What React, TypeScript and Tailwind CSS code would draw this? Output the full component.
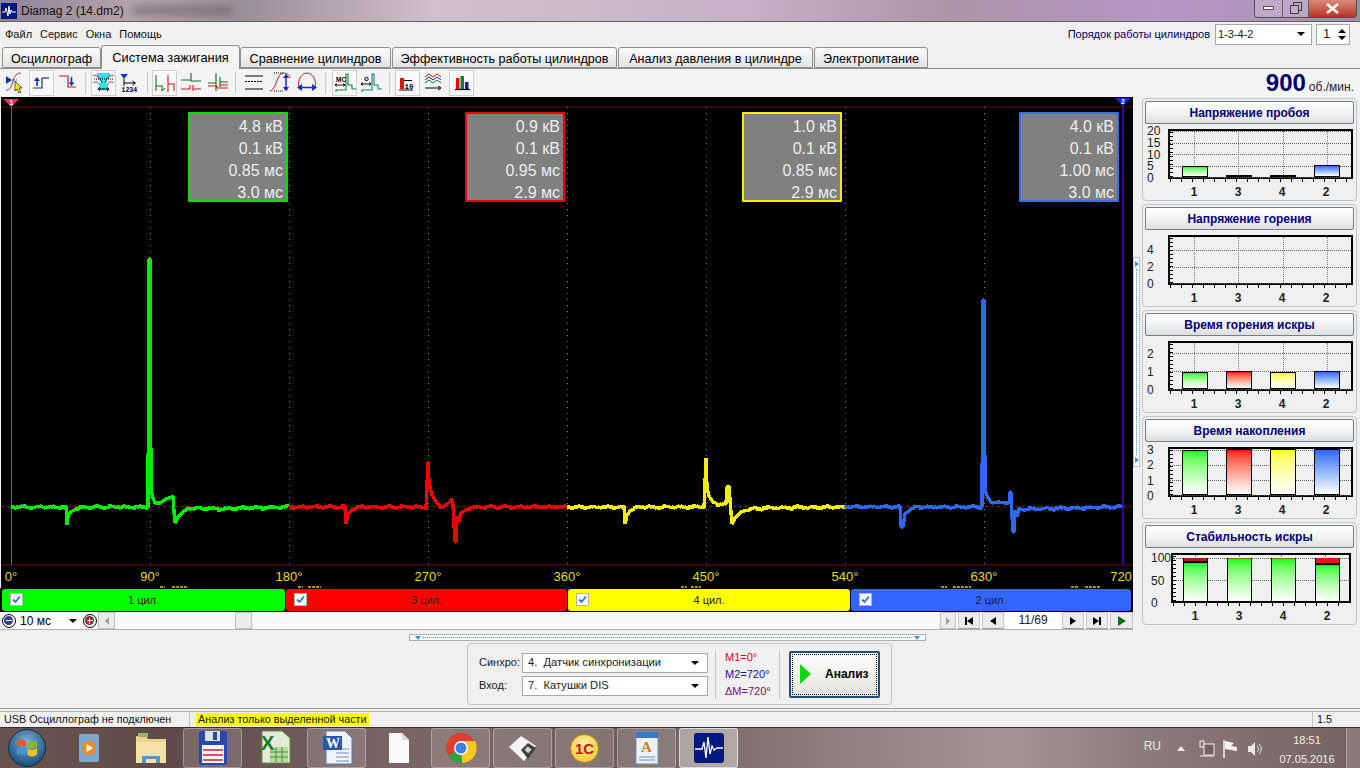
import React from "react";

type Pt = [number, number];

// small repeatable jitter so the traces look like sampled data
function jitter(x: number) {
  return Math.round(Math.sin(x * 1.7) * 1 + Math.sin(x * 0.43 + 1) * 0.8);
}

function buildTrace(x0: number, x1: number, keys: Pt[]) {
  const pts: Pt[] = [];
  const all: Pt[] = [[x0, 507], ...keys, [x1, 507]];
  for (let i = 0; i < all.length - 1; i++) {
    const [ax, ay] = all[i];
    const [bx, by] = all[i + 1];
    const steps = Math.max(1, Math.round((bx - ax) / 2));
    for (let s = 0; s < steps; s++) {
      const x = ax + ((bx - ax) * s) / steps;
      const y = ay + ((by - ay) * s) / steps;
      pts.push([x, y + (Math.abs(y - 507) < 3 ? jitter(x) : 0)]);
    }
  }
  pts.push([x1, 507]);
  // scope svg starts one pixel in from the window edge
  return pts.map((p) => `${p[0] - 1},${p[1] - 97}`).join(" ");
}

const traces = [
  {
    color: "#00f000",
    pts: buildTrace(11, 289, [
      [66, 507], [67, 525], [68, 516], [71, 512], [76, 509], [82, 507], [148, 507], [149, 259], [150, 259], [151, 490],
      [153, 498], [155, 503], [160, 503], [166, 499], [172, 497], [173, 496], [174, 512], [175, 523], [178, 517], [184, 511], [190, 508], [215, 509],
    ]),
  },
  {
    color: "#f00000",
    pts: buildTrace(289, 567, [
      [345, 507], [346, 524], [348, 514], [352, 510], [358, 507], [426, 507], [428, 462], [429, 482], [432, 495], [437, 503], [442, 507], [447, 505],
      [452, 499], [453, 505], [455, 542], [456, 542], [457, 516], [459, 522], [461, 513], [468, 509], [475, 507],
    ]),
  },
  {
    color: "#f0f000",
    pts: buildTrace(567, 845, [
      [624, 507], [625, 524], [627, 515], [631, 510], [637, 507], [704, 507], [706, 458], [707, 488], [709, 496], [713, 502], [720, 505], [726, 504],
      [727, 487], [729, 486], [730, 500], [732, 524], [735, 518], [741, 512], [750, 509], [770, 508],
    ]),
  },
  {
    color: "#2f68f0",
    pts: buildTrace(845, 1122, [
      [900, 507], [901, 527], [903, 527], [905, 514], [910, 510], [917, 507], [982, 507], [983, 300], [984, 300], [985, 490], [988, 498],
      [992, 503], [998, 502], [1006, 503], [1009, 503], [1010, 492], [1011, 492], [1012, 516], [1013, 532], [1014, 532], [1015, 510], [1017, 517], [1019, 509], [1030, 509],
    ]),
  },
];

const cards = [
  { border: "border-[#00e000]", rows: ["4.8 кВ", "0.1 кВ", "0.85 мс", "3.0 мс"] },
  { border: "border-[#f00000]", rows: ["0.9 кВ", "0.1 кВ", "0.95 мс", "2.9 мс"] },
  { border: "border-[#f0f000]", rows: ["1.0 кВ", "0.1 кВ", "0.85 мс", "2.9 мс"] },
  { border: "border-[#3a6cf0]", rows: ["4.0 кВ", "0.1 кВ", "1.00 мс", "3.0 мс"] },
];

const degrees = ["0°", "90°", "180°", "270°", "360°", "450°", "540°", "630°", "720"];
const channels = [
  { name: "1 цил.", bg: "bg-[#00ff00]", w: "w-[283px]" },
  { name: "3 цил.", bg: "bg-[#ff0000]", w: "w-[281px]" },
  { name: "4 цил.", bg: "bg-[#ffff00]", w: "w-[282px]" },
  { name: "2 цил.", bg: "bg-[#3366ff]", w: "w-[280px]" },
];

const fills = [
  "bg-gradient-to-b from-[#00ff00] to-white",
  "bg-gradient-to-b from-[#ff0000] to-white",
  "bg-gradient-to-b from-[#ffff00] to-white",
  "bg-gradient-to-b from-[#3366ff] to-white",
];
const cylNames = ["1", "3", "4", "2"];

const charts = [
  { title: "Напряжение пробоя", max: 20, ticks: [20, 15, 10, 5, 0], bars: [4.6, 0.4, 0.4, 5.2] },
  { title: "Напряжение горения", max: 5.6, ticks: [4, 2, 0], bars: [0, 0, 0, 0] },
  { title: "Время горения искры", max: 2.58, ticks: [2, 1, 0], bars: [0.95, 1, 0.95, 1] },
  { title: "Время накопления", max: 3.04, ticks: [3, 2, 1, 0], bars: [2.96, 3.02, 3.02, 3.02] },
];

function Tab({ label, w, active }: { label: string; w: string; active?: boolean }) {
  return (
    <div
      className={
        active
          ? `${w} h-[24px] -mb-px z-10 bg-[#f4f4f4] border border-b-0 border-[#8e8e8e] rounded-t-[3px] text-center text-[12.8px] leading-[23px] text-black`
          : `${w} h-[21px] bg-gradient-to-b from-[#fbfbfb] to-[#e3e3e3] border border-[#8e8e8e] rounded-t-[3px] text-center text-[12.6px] leading-[22px] text-black`
      }
    >
      {label}
    </div>
  );
}

function ToolBtn({ pressed, children }: { pressed?: boolean; children: React.ReactNode }) {
  return (
    <div className={`w-[25px] h-[26px] flex items-center justify-center ${pressed ? "bg-[#fafafa] border border-[#d0d0d0]" : ""}`}>
      <svg width="25" height="25" viewBox="0 0 25 25" fill="none" className="shrink-0">
        {children}
      </svg>
    </div>
  );
}

function Sep({ w }: { w: string }) {
  return (
    <div className={`${w} h-[26px] flex justify-center items-center`}>
      <div className="w-px h-[22px] bg-[#c8c8c8]" />
    </div>
  );
}

function Toolbar() {
  return (
    <div className="flex items-center gap-px pl-[3px]">
      <ToolBtn>
        <path d="M3 19C7 20 8 16 10 10C11 5 14 2 18 2" stroke="#c82828" />
        <path d="M3 5L9 9L3 13Z" fill="#1030c0" />
        <path d="M9 9H14" stroke="#1030c0" strokeDasharray="1 1" />
        <path d="M12 10L19 17H16L18 21L15.5 22L14 18L12 20Z" fill="#ffe020" stroke="#302000" strokeWidth="0.7" />
      </ToolBtn>
      <ToolBtn pressed>
        <path d="M4 17H13V7" stroke="#1030a0" strokeWidth="1.2" />
        <path d="M13 7H20" stroke="#1a2a60" strokeWidth="1.2" />
        <path d="M8 15V9" stroke="#1030c0" strokeWidth="1.6" />
        <path d="M5 10L8 6L11 10Z" fill="#1030c0" />
      </ToolBtn>
      <ToolBtn>
        <path d="M4 5H13V16H21" stroke="#c81818" strokeWidth="1.2" />
        <path d="M16.5 6V12" stroke="#1030c0" strokeWidth="1.6" />
        <path d="M13.5 11.5L16.5 15L19.5 11.5Z" fill="#1030c0" />
      </ToolBtn>
      <Sep w="w-[9px]" />
      <ToolBtn pressed>
        <path d="M6 2H19V6L15 11L18 19H7L10 11L6 6Z" fill="#22e8f0" />
        <path d="M2 5C5 3 9 6 11 12M23 5C20 3 16 6 14 12M2 12C4 10 7 11 9 14M23 12C21 10 18 11 16 14" stroke="#902020" strokeWidth="0.9" />
        <path d="M3 8H22" stroke="#000" strokeDasharray="1 1" />
        <path d="M7 18H18M9 16L7 18L9 20M16 16L18 18L16 20" stroke="#000" />
      </ToolBtn>
      <ToolBtn>
        <path d="M3.5 3H11L7 8Z" fill="#1030c0" />
        <path d="M7 8V15M7 12H18M15.5 10L18.5 12L15.5 14" stroke="#000" />
        <text x="4.5" y="21" fontSize="6.5" fill="#000" fontFamily="Liberation Mono, monospace" fontWeight="700">1234</text>
      </ToolBtn>
      <Sep w="w-[8px]" />
      <ToolBtn pressed>
        <path d="M4 20V4M4 15H10V20" stroke="#107010" strokeWidth="1.1" />
        <path d="M10 20L13 17" stroke="#107010" />
        <path d="M16 4V21M16 13H22V20" stroke="#c81818" strokeWidth="1.1" />
      </ToolBtn>
      <ToolBtn>
        <path d="M3 9H13V2M13 9V10H23" stroke="#107010" strokeWidth="1.1" />
        <path d="M3 18H12V14M15 14V20M15 18H23" stroke="#c81818" strokeWidth="1.1" />
      </ToolBtn>
      <ToolBtn>
        <path d="M12 2V20M4 12H12M16 6V16M16 11H24" stroke="#107010" strokeWidth="1.1" />
        <path d="M4 15H13V17H24M16 14H24" stroke="#c81818" strokeWidth="1.1" />
      </ToolBtn>
      <Sep w="w-[11px]" />
      <ToolBtn>
        <path d="M3 5H21M3 18H21" stroke="#000" strokeWidth="1.2" />
        <path d="M3 10.5H21" stroke="#000" strokeDasharray="2 1" />
      </ToolBtn>
      <ToolBtn>
        <path d="M2 20C8 20 9 2 15 2C19 2 21 3 22 7" stroke="#c81818" />
        <path d="M6 2H15M6 20H16" stroke="#000" strokeDasharray="1 1" />
        <path d="M18 5V18" stroke="#1030c0" strokeWidth="1.5" />
        <path d="M15 7L18 2.5L21 7ZM15 16L18 20.5L21 16Z" fill="#1030c0" />
      </ToolBtn>
      <ToolBtn>
        <path d="M5 17C3 8 8 2 13 2C18 2 23 8 21 17" stroke="#c81818" />
        <path d="M7 16.5H19" stroke="#1030c0" strokeWidth="1.5" />
        <path d="M8 13L3 16.5L8 20ZM18 13L23 16.5L18 20Z" fill="#1030c0" />
      </ToolBtn>
      <Sep w="w-[11px]" />
      <ToolBtn pressed>
        <path d="M4 21V19H14V3H16V14H20V18H24" stroke="#108040" strokeWidth="1.1" />
        <path d="M3 14H13M5 12.5L3 14L5 15.5M11 12.5L13 14L11 15.5" stroke="#000" strokeWidth="0.9" />
        <text x="4" y="11" fontSize="6.5" fontWeight="700" fill="#000" fontFamily="Liberation Sans, sans-serif">МС</text>
      </ToolBtn>
      <ToolBtn>
        <path d="M4 21V19H14V3H16V14H20V18H24" stroke="#108080" strokeWidth="1.1" />
        <path d="M3 13H13M5 11.5L3 13L5 14.5M11 11.5L13 13L11 14.5" stroke="#000" strokeWidth="0.9" />
        <circle cx="8.5" cy="8" r="1.7" stroke="#000" />
      </ToolBtn>
      <Sep w="w-[10px]" />
      <ToolBtn pressed>
        <path d="M5 7H9V18H5Z" fill="#e01010" />
        <path d="M9 9.5H17M4 19H18" stroke="#000" />
        <text x="9.5" y="17.5" fontSize="7.5" fill="#000" fontWeight="700" fontFamily="Liberation Mono, monospace">10</text>
      </ToolBtn>
      <ToolBtn>
        <path d="M4 6L8 3L12 6L16 3L20 6" stroke="#c81818" />
        <path d="M4 9L8 6L12 9L16 6L20 9" stroke="#1030c0" />
        <path d="M4 12L8 9L12 12L16 9L20 12" stroke="#108010" />
        <path d="M4 17H20M17 15L20 17L17 19" stroke="#000" />
      </ToolBtn>
      <div className="w-[1px]" />
      <ToolBtn pressed>
        <path d="M7 7H10.5V18H7Z" fill="#e01010" />
        <path d="M11.5 5H15V18H11.5Z" fill="#108030" />
        <path d="M16 11H19.5V18H16Z" fill="#1020a0" />
        <path d="M6 18.5H21" stroke="#000" strokeWidth="1.2" />
      </ToolBtn>
    </div>
  );
}

function Scope() {
  return (
    <div className="relative h-[491px] bg-black overflow-hidden ml-px">
      <svg width="1132" height="491" className="block">
        <path d="M0 10H1132M0 468H1132" stroke="#6a1010" />
        {[149, 288, 427, 566, 705, 844, 983].map((x) => (
          <path key={x} d={`M${x}.5 10V468`} stroke="#808080" strokeDasharray="1 5" />
        ))}
        <path d="M0 409.5H1132" stroke="#702020" strokeDasharray="3 3" />
        <path d="M10.5 4V468" stroke="#c04050" />
        <path d="M1122 2V468" stroke="#400090" strokeWidth="2" />
        <path d="M2 2H18L10.5 10Z" fill="#f03060" />
        <text x="8.5" y="7.5" fontSize="6.5" fontWeight="700" fill="#fff" fontFamily="Liberation Sans, sans-serif">1</text>
        <path d="M1114 1H1130L1122 9Z" fill="#1030e0" />
        <text x="1120" y="7" fontSize="6.5" fontWeight="700" fill="#fff" fontFamily="Liberation Sans, sans-serif">2</text>
        {traces.map((t) => (
          <polyline key={t.color} points={t.pts} fill="none" stroke={t.color} strokeWidth="3.4" strokeLinejoin="bevel" shapeRendering="crispEdges" />
        ))}
        {/* tops of the time scale, the row itself is hidden by the channel bars */}
        <path
          d="M159 490H164M171 490H187M297 490H302M307 490H320M680 490H686M690 490H700M940 490H946M952 490H970M1070 490H1078M1084 490H1100"
          stroke="#d8c830"
          strokeWidth="1.5"
          strokeDasharray="3 1"
        />
      </svg>
      {cards.map((c, i) => (
        <div
          key={i}
          className={`absolute top-[15px] w-[100px] h-[90px] bg-[#808080] border-2 rounded-[1px] ${c.border} text-right pr-[3px] pt-[2px] text-[16px] leading-[22px] text-[#eeeeee]`}
          style={{ left: 187 + i * 277 }}
        >
          {c.rows.map((r) => (
            <div key={r}>{r}</div>
          ))}
        </div>
      ))}
      {degrees.map((d, i) => (
        <span
          key={d}
          className="absolute top-[473px] -translate-x-1/2 text-[13px] leading-[14px] text-[#e8d830]"
          style={{ left: i === 8 ? 1120 : i === 0 ? 10 : 10 + i * 139 }}
        >
          {d}
        </span>
      ))}
    </div>
  );
}

function ChannelBars() {
  return (
    <div className="bg-black h-[24px] flex items-start pt-px gap-px pl-[2px]">
      {channels.map((c) => (
        <div key={c.name} className={`${c.w} h-[22px] ${c.bg} rounded-[3px] relative text-center text-[11px] leading-[22px] text-[#202020]`}>
          <div className="absolute left-[8px] top-[4px] w-[13px] h-[13px] bg-white border border-[#b0b0b0] flex items-center justify-center">
            <svg width="9" height="9" viewBox="0 0 9 9" fill="none">
              <path d="M1 4.5L3.5 7L8 1.5" stroke="#2a70d8" strokeWidth="1.8" />
            </svg>
          </div>
          {c.name}
        </div>
      ))}
    </div>
  );
}

function NavBtn({ w = "w-[22px]", children }: { w?: string; children: React.ReactNode }) {
  return (
    <div className={`${w} h-[17px] bg-[#ececec] border border-[#c8c8c8] border-b-[#a0a0a0] flex items-center justify-center`}>
      {children}
    </div>
  );
}

function ScaleRow() {
  return (
    <div className="h-[18px] flex items-start bg-white border-b border-[#b0b0b0]">
      <div className="w-[17px] h-[17px] flex items-center justify-center">
        <div className="w-[14px] h-[14px] rounded-full border border-black flex items-center justify-center">
          <div className="w-[9px] h-[9px] rounded-full bg-[#3040a0] flex items-center justify-center">
            <div className="w-[6px] h-px bg-white" />
          </div>
        </div>
      </div>
      <div className="w-[64px] h-[17px] flex items-center justify-between pl-[3px] pr-[4px] text-[12px] text-black">
        <span>10 мс</span>
        <span className="w-0 h-0 border-x-[4px] border-x-transparent border-t-[4px] border-t-black" />
      </div>
      <div className="w-[17px] h-[17px] flex items-center justify-center">
        <div className="w-[14px] h-[14px] rounded-full border border-black flex items-center justify-center">
          <div className="w-[9px] h-[9px] rounded-full bg-[#a02030] relative flex items-center justify-center">
            <div className="w-[6px] h-px bg-white" />
            <div className="absolute w-px h-[6px] bg-white" />
          </div>
        </div>
      </div>
      <div className="w-[17px] h-[17px] bg-[#ececec] border border-[#c0c0c0] flex items-center justify-center">
        <span className="w-0 h-0 border-y-[4px] border-y-transparent border-r-[4px] border-r-[#a0a0a0]" />
      </div>
      <div className="w-[825px] h-[17px] bg-[#f8f8f8] pl-[120px]">
        <div className="w-[17px] h-[17px] bg-[#ececec] border border-[#c0c0c0]" />
      </div>
      <div className="w-[16px] h-[17px] bg-[#ececec] border border-[#c0c0c0] flex items-center justify-center">
        <span className="w-0 h-0 border-y-[4px] border-y-transparent border-l-[4px] border-l-[#a0a0a0]" />
      </div>
      <div className="flex items-center gap-[2px] ml-[2px]">
        <NavBtn>
          <span className="w-[2px] h-[8px] bg-black" />
          <span className="w-0 h-0 border-y-[4px] border-y-transparent border-r-[6px] border-r-black" />
        </NavBtn>
        <NavBtn>
          <span className="w-0 h-0 border-y-[4px] border-y-transparent border-r-[6px] border-r-black" />
        </NavBtn>
        <div className="w-[54px] text-center text-[12px] leading-[17px] text-[#202020]">11/69</div>
        <NavBtn>
          <span className="w-0 h-0 border-y-[4px] border-y-transparent border-l-[6px] border-l-black" />
        </NavBtn>
        <NavBtn>
          <span className="w-0 h-0 border-y-[4px] border-y-transparent border-l-[6px] border-l-black" />
          <span className="w-[2px] h-[8px] bg-black" />
        </NavBtn>
        <NavBtn w="w-[23px]">
          <span className="w-0 h-0 border-y-[5px] border-y-transparent border-l-[8px] border-l-[#107010]" />
        </NavBtn>
      </div>
    </div>
  );
}

function Panel({ title, children }: { title: string; children: React.ReactNode }) {
  return (
    <div className="h-[103px] rounded-[4px] border border-[#c4c4c4] p-[2px]">
      <div className="h-[23px] rounded-[2px] border border-[#708090] bg-gradient-to-b from-white via-[#f4f4f4] to-[#dedede] text-center text-[12px] font-bold leading-[22px] text-[#000080]">
        {title}
      </div>
      {children}
    </div>
  );
}

const tickRow = "absolute left-0 right-0 -bottom-[5px] h-[3px] bg-[repeating-linear-gradient(90deg,#000_0_1px,transparent_1px_11px)]";
const tickCol = "absolute top-0 bottom-0 left-0 w-[3px] bg-[repeating-linear-gradient(0deg,#000_0_1px,transparent_1px_4px)]";

function Plot({ max, ticks, bars }: { max: number; ticks: number[]; bars: number[] }) {
  return (
    <>
      <div className="flex mt-[5px]">
        <div className="w-[23px] h-[50px] relative text-[12px] leading-[12px] text-[#202020]">
          {ticks.map((t) => (
            <span key={t} className="absolute left-[2px] -translate-y-1/2" style={{ top: 49 - (t / max) * 47 }}>
              {t}
            </span>
          ))}
        </div>
        <div className="relative w-[185px] h-[50px] border-2 border-black bg-[#f0f0f0]">
          {ticks.map((t) => (
            <div key={t} className="absolute left-0 right-0 border-t border-dotted border-[#606060]" style={{ top: 46 - (t / max) * 46 }} />
          ))}
          {[24, 68, 113, 157].map((x) => (
            <div key={x} className="absolute top-0 bottom-0 border-l border-dotted border-[#808080]" style={{ left: x }} />
          ))}
          <div className="relative flex items-end h-full gap-[18px] pl-[12px]">
            {bars.map((b, i) => (
              <div key={i} className={`w-[26px] ${b > 0 ? "border border-black" : ""} ${fills[i]}`} style={{ height: (b / max) * 46 }} />
            ))}
          </div>
          <div className={tickRow} />
          <div className={tickCol} />
        </div>
      </div>
      <div className="flex gap-[18px] pl-[36px] mt-[6px] text-[12px] font-bold leading-[14px] text-[#202020]">
        {cylNames.map((c) => (
          <span key={c} className="w-[26px] text-center">
            {c}
          </span>
        ))}
      </div>
    </>
  );
}

function StabilityPlot() {
  const stack = [
    { top: 3, mid: 2, color: "bg-[#a82020]" },
    { top: 1, mid: 0, color: "bg-[#808000]" },
    { top: 1, mid: 0, color: "bg-[#808000]" },
    { top: 5, mid: 2, color: "bg-[#e01818]" },
  ];
  return (
    <>
      <div className="flex mt-[5px]">
        <div className="w-[26px] h-[50px] relative text-[12px] leading-[12px] text-[#202020]">
          {[100, 50, 0].map((t) => (
            <span key={t} className="absolute left-[6px] -translate-y-1/2" style={{ top: 50 - (t / 100) * 45 }}>
              {t}
            </span>
          ))}
        </div>
        <div className="relative w-[180px] h-[50px] border-2 border-black bg-[#f0f0f0]">
          {[3, 25].map((y) => (
            <div key={y} className="absolute left-0 right-0 border-t border-dotted border-[#606060]" style={{ top: y }} />
          ))}
          {[22, 66, 108, 152].map((x) => (
            <div key={x} className="absolute top-0 bottom-0 border-l border-dotted border-[#808080]" style={{ left: x }} />
          ))}
          <div className="relative flex items-end h-full gap-[19px] pl-[10px]">
            {stack.map((s, i) => (
              <div key={i} className="w-[25px] h-[43px] border-x border-black flex flex-col">
                <div className={`${s.color} shrink-0`} style={{ height: s.top }} />
                <div className="bg-black shrink-0" style={{ height: s.mid }} />
                <div className="flex-1 bg-gradient-to-b from-[#00ff00] to-white" />
              </div>
            ))}
          </div>
          <div className={tickRow} />
          <div className={tickCol} />
        </div>
      </div>
      <div className="flex gap-[18px] pl-[37px] mt-[6px] text-[12px] font-bold leading-[14px] text-[#202020]">
        {cylNames.map((c) => (
          <span key={c} className="w-[26px] text-center">
            {c}
          </span>
        ))}
      </div>
    </>
  );
}

function SelectBox({ value, w }: { value: string; w: string }) {
  return (
    <div className={`${w} h-[20px] bg-white border border-[#a8a8a8] flex items-center justify-between pl-[5px] pr-[8px] text-[11.2px] text-[#202020]`}>
      <span className="whitespace-pre">{value}</span>
      <span className="w-0 h-0 border-x-[4px] border-x-transparent border-t-[4px] border-t-black" />
    </div>
  );
}

function ControlPanel() {
  return (
    <div className="ml-[467px] mt-[2px] w-[425px] h-[62px] rounded-[4px] border border-[#c4c4c4] flex items-center pl-[11px]">
      <div className="flex flex-col gap-[3px] text-[11px] text-[#202020]">
        <div className="flex items-center">
          <span className="w-[43px]">Синхро:</span>
          <SelectBox value="4.  Датчик синхронизации" w="w-[186px]" />
        </div>
        <div className="flex items-center">
          <span className="w-[43px]">Вход:</span>
          <SelectBox value="7.  Катушки DIS" w="w-[186px]" />
        </div>
      </div>
      <div className="w-px h-[49px] bg-[#c8c8c8] ml-[7px]" />
      <div className="w-[63px] pl-[9px] pt-px text-[11px] leading-[17px]">
        <div className="text-[#c01020]">M1=0°</div>
        <div className="text-[#1010a0]">M2=720°</div>
        <div className="text-[#701080]">ΔM=720°</div>
      </div>
      <div className="w-px h-[49px] bg-[#c8c8c8]" />
      <div className="ml-[9px] w-[91px] h-[47px] rounded-[2px] border-2 border-[#1d4f80] p-px bg-gradient-to-b from-white to-[#e4e4e0]">
        <div className="h-full border border-dotted border-black flex items-center pl-[7px]">
          <svg width="11" height="20" viewBox="0 0 11 20">
            <path d="M0 0L11 10L0 20Z" fill="#10d810" />
          </svg>
          <span className="ml-[14px] text-[12px] font-bold text-black">Анализ</span>
        </div>
      </div>
    </div>
  );
}

function TaskItem({ active, bright, children }: { active?: boolean; bright?: boolean; children: React.ReactNode }) {
  return (
    <div
      className={`w-[59px] h-[40px] rounded-[3px] flex items-center justify-center ${
        bright
          ? "bg-white/40 border border-white/60"
          : active
            ? "bg-white/15 border border-white/30"
            : "border border-transparent"
      }`}
    >
      {children}
    </div>
  );
}

function Taskbar() {
  return (
    <div className="h-[41px] shrink-0 border-t border-[#383030] bg-[linear-gradient(90deg,#6a5450_0%,#5e4a48_12%,#7a6664_30%,#6e5c5a_45%,#8d7c7c_60%,#a59497_74%,#8d7a7c_84%,#756262_100%)] flex items-center">
      <div className="ml-[8px] mr-[13px] w-[38px] h-[38px] rounded-full bg-[radial-gradient(circle_at_50%_35%,#7fb4dc,#28608c_65%,#0e2c48)] border border-[#1b2c3c] flex items-center justify-center">
        <svg width="24" height="22" viewBox="0 0 24 22">
          <path d="M2 4C5 2 8 2 11 4V10C8 8 5 8 2 10Z" fill="#e8562a" />
          <path d="M12.5 4C15 6 19 6 22 3V9.5C19 12 15 12 12.5 10Z" fill="#86bc2c" />
          <path d="M2 11.5C5 9.5 8 9.5 11 11.5V18C8 16 5 16 2 18Z" fill="#3c98dc" />
          <path d="M12.5 11.5C15 13.5 19 13.5 22 11V17.5C19 20 15 20 12.5 18Z" fill="#f8c020" />
        </svg>
      </div>
      <div className="flex gap-[3px]">
        <TaskItem>
          <svg width="28" height="34" viewBox="0 0 28 34">
            <rect x="4" y="3" width="20" height="28" rx="2" fill="#7fa8cc" />
            <circle cx="14" cy="17" r="7" fill="#f08c1c" />
            <path d="M11.5 13L18 17L11.5 21Z" fill="#fff" />
          </svg>
        </TaskItem>
        <TaskItem>
          <svg width="34" height="36" viewBox="0 0 34 36">
            <path d="M2 6H12L14 9H32V32H2Z" fill="#edd28a" />
            <rect x="4" y="3" width="10" height="4" fill="#90b860" />
            <path d="M2 12H32V33H2Z" fill="#f6e2a4" />
            <path d="M8 26H26V33H22V29H12V33H8Z" fill="#5c94c0" />
          </svg>
        </TaskItem>
        <TaskItem active>
          <svg width="32" height="36" viewBox="0 0 32 36">
            <rect x="2" y="1" width="28" height="34" rx="2" fill="#2848b0" />
            <rect x="8" y="1" width="15" height="10" fill="#d8e0f0" />
            <rect x="16" y="2" width="4" height="8" fill="#2848b0" />
            <rect x="5" y="15" width="22" height="18" fill="#f4f4f8" />
            <path d="M6 20H26M6 25H26M6 30H26" stroke="#c02030" strokeWidth="1.6" />
          </svg>
        </TaskItem>
        <TaskItem>
          <svg width="34" height="38" viewBox="0 0 34 38">
            <path d="M4 2H24L32 9V34H4Z" fill="#e4ecd8" stroke="#5a9040" />
            <path d="M12 18H30V33H12Z" fill="#b8dca0" />
            <path d="M18 18V33M24 18V33M12 23H30M12 28H30" stroke="#50883c" />
            <text x="3" y="21" fontSize="20" fontWeight="700" fill="#1a7a2a" fontFamily="Liberation Sans, sans-serif">X</text>
          </svg>
        </TaskItem>
        <TaskItem active>
          <svg width="34" height="38" viewBox="0 0 34 38">
            <path d="M6 2H25L32 9V35H6Z" fill="#f0f4fa" stroke="#5878b0" />
            <path d="M16 20H29M16 24H29M16 28H29M16 32H29" stroke="#6e8ec4" />
            <rect x="3" y="7" width="19" height="14" fill="#2858b0" />
            <text x="6" y="19" fontSize="14" fontWeight="700" fill="#fff" fontFamily="Liberation Serif, serif">W</text>
          </svg>
        </TaskItem>
        <TaskItem>
          <svg width="24" height="34" viewBox="0 0 24 34">
            <path d="M2 2H15L22 9V32H2Z" fill="#fafafa" />
            <path d="M15 2V9H22Z" fill="#d8d8d8" />
          </svg>
        </TaskItem>
        <TaskItem active>
          <svg width="32" height="32" viewBox="0 0 32 32">
            <circle cx="16" cy="16" r="15" fill="#e03c30" />
            <path d="M16 16L3 23.5A15 15 0 0 0 16 31A15 15 0 0 0 21 30Z" fill="#30a040" />
            <path d="M16 9H30A15 15 0 0 1 17 31Z" fill="#f8c820" />
            <circle cx="16" cy="16" r="7" fill="#fff" />
            <circle cx="16" cy="16" r="5.5" fill="#4080e8" />
          </svg>
        </TaskItem>
        <TaskItem active>
          <svg width="32" height="32" viewBox="0 0 32 32">
            <path d="M2 15L14 4L29 14L17 29Z" fill="#f4f4f4" />
            <path d="M14 18L21 11L29 16L21 27Z" fill="#404040" />
            <rect x="19" y="15" width="5" height="5" transform="rotate(40 21 17)" fill="#d0d0d0" />
          </svg>
        </TaskItem>
        <TaskItem active>
          <div className="w-[29px] h-[29px] rounded-full bg-[radial-gradient(circle_at_50%_35%,#fff2a0,#f0c020)] border border-[#b09010] text-center text-[15px] font-bold leading-[27px] text-[#d81010]">
            1С
          </div>
        </TaskItem>
        <TaskItem active>
          <svg width="26" height="34" viewBox="0 0 26 34">
            <rect x="2" y="1" width="22" height="32" fill="#eef2f8" stroke="#7090c0" />
            <rect x="2" y="1" width="22" height="6" fill="#3878c8" />
            <path d="M5 26H21M5 29H21" stroke="#7090c0" />
            <text x="7" y="21" fontSize="15" fontWeight="700" fill="#e07820" fontFamily="Liberation Serif, serif">A</text>
          </svg>
        </TaskItem>
        <TaskItem bright>
          <svg width="32" height="32" viewBox="0 0 32 32">
            <rect x="1" y="1" width="30" height="30" rx="3" fill="#001880" />
            <path d="M2 17H9L11 10L13 26L15 5L17 22L19 14L21 18L24 16H30" stroke="#fff" strokeWidth="1.3" fill="none" />
          </svg>
        </TaskItem>
      </div>
      <div className="ml-auto flex items-center">
        <span className="text-[12px] text-[#e8e8e8] mb-[5px]">RU</span>
        <svg width="86" height="22" viewBox="0 0 86 22" className="ml-[15px] mt-[2px]" fill="none">
          <path d="M1 13L5 8L9 13Z" fill="#f0f0f0" />
          <rect x="24" y="3" width="4" height="6" stroke="#f0f0f0" />
          <rect x="28" y="6" width="10" height="11" stroke="#f0f0f0" fill="#70605e" />
          <path d="M24 18H38" stroke="#f0f0f0" />
          <path d="M48 2V20" stroke="#f4f4f4" strokeWidth="1.5" />
          <path d="M49 3L58 5L55 8L61 9V13L49 11Z" fill="#f4f4f4" />
          <path d="M72 8H75L79 4V18L75 14H72Z" fill="#e8e8e8" />
          <path d="M81 8C83 10 83 12 81 14M83 6C86 9 86 13 83 16" stroke="#e8e8e8" />
        </svg>
        <div className="ml-[17px] mt-[3px] w-[56px] text-center text-[11px] leading-[19px] text-[#f0f0f0]">
          <div>18:51</div>
          <div>07.05.2016</div>
        </div>
        <div className="ml-[11px] w-[14px] h-[40px] bg-white/15 border-l border-white/30" />
      </div>
    </div>
  );
}

export default function App() {
  return (
    <div className="w-[1360px] h-[768px] overflow-hidden flex flex-col bg-[#f0f0f0] font-['Liberation_Sans',sans-serif]">
      {/* title bar */}
      <div className="h-[22px] shrink-0 border-b border-[#606060] flex items-center bg-[linear-gradient(90deg,#8f8298_0%,#b6a5ad_10%,#9c8e98_18%,#d3bfcf_32%,#c7b0c8_55%,#ad93a8_70%,#b596c4_85%,#b295bd_92%,#a68ba8_100%)]">
        <svg width="16" height="16" viewBox="0 0 16 16" className="ml-px">
          <rect width="16" height="16" fill="#001880" />
          <path d="M1 9H4L5 5L7 13L8 3L9 11L10 7L11 9H15" stroke="#fff" fill="none" />
        </svg>
        <span className="ml-[4px] text-[12px] text-[#101010]">Diamag 2 (14.dm2)</span>
        <div className="ml-[8px] w-[100px] h-[9px] bg-[#5a4a50]/50 blur-[4px]" />
        <div className="ml-auto mr-[3px] mb-[4px] flex h-[18px] border border-t-0 border-[#505050] rounded-b-[4px] overflow-hidden">
          <div className="w-[28px] bg-white/20 border-r border-[#606060] flex items-center justify-center">
            <div className="w-[11px] h-[4px] bg-white/90 border border-[#505050]" />
          </div>
          <div className="w-[26px] bg-white/20 border-r border-[#606060] flex items-center justify-center">
            <svg width="12" height="12" viewBox="0 0 12 12" fill="none">
              <rect x="3.5" y="0.5" width="8" height="8" stroke="#404040" />
              <rect x="0.5" y="3.5" width="8" height="8" stroke="#404040" fill="#c0b0c8" />
            </svg>
          </div>
          <div className="w-[47px] bg-gradient-to-b from-[#d88878] to-[#b83020] flex items-center justify-center">
            <svg width="13" height="11" viewBox="0 0 13 11">
              <path d="M1 1L12 10M12 1L1 10" stroke="#fff" strokeWidth="2.6" />
            </svg>
          </div>
        </div>
      </div>

      {/* menu row */}
      <div className="h-[24px] shrink-0 flex items-center pl-[5px] text-[11px] text-[#101010]">
        <div className="flex gap-[8px]">
          <span>Файл</span>
          <span>Сервис</span>
          <span>Окна</span>
          <span>Помощь</span>
        </div>
        <div className="ml-auto flex items-center text-[#000060]">
          <span className="mr-[5px]">Порядок работы цилиндров</span>
          <div className="w-[97px] h-[21px] bg-white border border-[#a8a8a8] flex items-center justify-between pl-[2px] pr-[6px] text-[#202020]">
            <span>1-3-4-2</span>
            <span className="w-0 h-0 border-x-[4px] border-x-transparent border-t-[4px] border-t-black" />
          </div>
          <div className="ml-[4px] mr-[10px] w-[34px] h-[21px] bg-white border border-[#a8a8a8] flex items-center justify-between pl-[6px] pr-[3px] text-[13px] text-[#202020]">
            <span>1</span>
            <div className="flex flex-col gap-[3px]">
              <span className="w-0 h-0 border-x-[4px] border-x-transparent border-b-[4px] border-b-black" />
              <span className="w-0 h-0 border-x-[4px] border-x-transparent border-t-[4px] border-t-black" />
            </div>
          </div>
        </div>
      </div>

      {/* tabs */}
      <div className="h-[23px] shrink-0 flex items-end pl-[2px] border-b border-[#8e8e8e]">
        <Tab label="Осциллограф" w="w-[99px]" />
        <Tab label="Система зажигания" w="w-[139px]" active />
        <Tab label="Сравнение цилиндров" w="w-[151px]" />
        <div className="w-px" />
        <Tab label="Эффективность работы цилиндров" w="w-[225px]" />
        <div className="w-px" />
        <Tab label="Анализ давления в цилиндре" w="w-[195px]" />
        <div className="w-px" />
        <Tab label="Электропитание" w="w-[114px]" />
      </div>

      {/* toolbar */}
      <div className="h-[28px] shrink-0 flex items-center bg-[#f4f4f4]">
        <Toolbar />
        <div className="ml-auto mr-[6px] flex items-baseline text-[#000070]">
          <span className="text-[24px] font-bold leading-[28px]">900</span>
          <span className="ml-[3px] text-[12px] text-[#202040]">об./мин.</span>
        </div>
      </div>

      {/* scope and side charts */}
      <div className="h-[534px] shrink-0 flex">
        <div className="w-[1133px] shrink-0">
          <Scope />
          <ChannelBars />
          <ScaleRow />
        </div>
        <div className="w-[9px] shrink-0 pt-[160px]">
          <div className="w-[7px] h-[210px] bg-white border border-[#c0c0c0] flex flex-col items-center justify-between py-[3px]">
            <span className="w-0 h-0 border-y-[3px] border-y-transparent border-l-[4px] border-l-[#4090d8]" />
            <div className="flex-1 my-[2px] border-l border-dotted border-[#4090d8]" />
            <span className="w-0 h-0 border-y-[3px] border-y-transparent border-l-[4px] border-l-[#4090d8]" />
          </div>
        </div>
        <div className="w-[215px] shrink-0 flex flex-col gap-[3px] pt-[1px]">
          {charts.map((c) => (
            <Panel key={c.title} title={c.title}>
              <Plot max={c.max} ticks={c.ticks} bars={c.bars} />
            </Panel>
          ))}
          <Panel title="Стабильность искры">
            <StabilityPlot />
          </Panel>
        </div>
      </div>

      {/* splitter + analysis controls */}
      <div className="h-[78px] shrink-0 border-b border-[#a0a0a0]">
        <div className="ml-[409px] mt-[3px] w-[517px] h-[7px] bg-white border border-[#b0b0b0] flex items-center px-[5px]">
          <span className="w-0 h-0 border-x-[3px] border-x-transparent border-t-[4px] border-t-[#4090d8]" />
          <div className="flex-1 mx-[2px] border-t border-dotted border-[#4090d8]" />
          <span className="w-0 h-0 border-x-[3px] border-x-transparent border-t-[4px] border-t-[#4090d8]" />
        </div>
        <ControlPanel />
      </div>

      {/* status bar */}
      <div className="h-[16px] shrink-0 mt-[2px] border-t border-[#b0b0b0] flex items-center text-[10.8px] text-[#101010]">
        <div className="w-[190px] pl-[4px] border-r border-[#c0c0c0] h-full leading-[14px]">USB Осциллограф не подключен</div>
        <div className="ml-[6px] px-[2px] bg-[#ffff00] leading-[13px]">Анализ только выделенной части</div>
        <div className="ml-auto w-[48px] pl-[4px] border-l border-[#c0c0c0] h-full leading-[14px]">1.5</div>
      </div>

      <Taskbar />
    </div>
  );
}
